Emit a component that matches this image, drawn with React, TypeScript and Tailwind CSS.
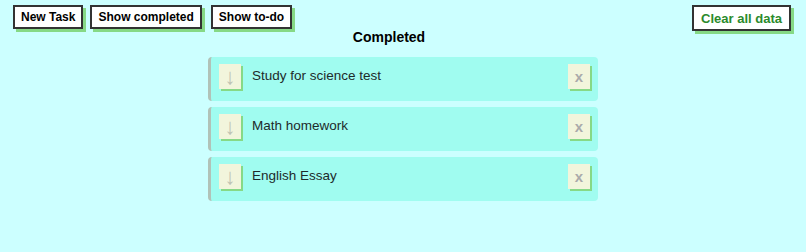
import React from 'react';

const tasks = ['Study for science test', 'Math homework', 'English Essay'];

const TopButton: React.FC<{ label: string; green?: boolean; className?: string }> = ({ label, green, className }) => (
  <button
    className={
      (green
        ? 'h-[26px] px-[7px] bg-white border-2 border-[#333333] shadow-[3px_3px_0_#86d986] text-[13px] font-bold text-[#2b8a2b] leading-none '
        : 'h-[24px] px-[6px] bg-white border-2 border-[#333333] shadow-[3px_3px_0_#86d986] text-[12px] font-bold text-black leading-none ') +
      (className ?? '')
    }
  >
    {label}
  </button>
);

export default function App() {
  return (
    <div className="min-h-[252px] w-full bg-[#ccffff] font-['Liberation_Sans',Arial,sans-serif]">
      <div className="flex items-start justify-between pt-[5px] pl-[13px] pr-[15px]">
        <div className="flex">
          <TopButton label="New Task" />
          <TopButton label="Show completed" className="ml-[7px]" />
          <TopButton label="Show to-do" className="ml-[9px]" />
        </div>
        <TopButton label="Clear all data" green />
      </div>

      <div className="flex justify-center pr-[28px] -mt-[3px]">
        <h2 className="text-[14px] font-bold text-black leading-[18px]">Completed</h2>
      </div>

      <div className="mt-[11px] flex flex-col items-center gap-[6px]">
        {tasks.map((task) => (
          <div
            key={task}
            className="w-[390px] h-[44px] bg-[#a0fcf0] border-l-[3px] border-[#b1c2b8] rounded-[4px] flex items-start pt-[7px] pl-[8px] pr-[8px]"
          >
            <button className="w-[22px] h-[25px] bg-[#f2f5dc] shadow-[2px_2px_0_#86d986] flex items-center justify-center text-[#bfc3b4] text-[22px] font-light leading-none">
              ↓
            </button>
            <span className="ml-[11px] mt-[4px] text-[13.5px] text-[#1d2b2b] leading-[16px] flex-1">{task}</span>
            <button className="w-[22px] h-[25px] bg-[#f2f5dc] shadow-[2px_2px_0_#86d986] flex items-center justify-center text-[#aaaaaa] text-[15px] font-bold leading-none pb-[1px]">
              x
            </button>
          </div>
        ))}
      </div>
    </div>
  );
}
